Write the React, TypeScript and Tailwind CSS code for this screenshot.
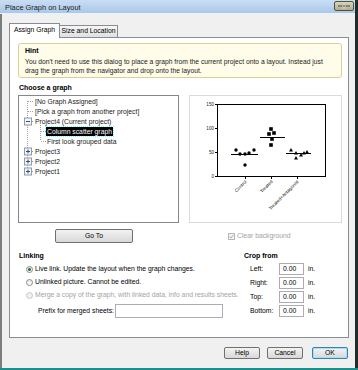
import React from "react";

function CloseBtn() {
  return (
    <div className="w-[20px] h-[10px] mt-[-1px] rounded-[2px] border border-[#54523f] bg-gradient-to-b from-[#d9d5bb] to-[#b3ad8a] flex items-center justify-center">
      <svg width="12" height="8" viewBox="0 0 12 8">
        <line x1="0" y1="4" x2="12" y2="4" stroke="#4a4838" strokeWidth="1" />
        <path d="M4 1.5 L8 6.5 M8 1.5 L4 6.5" stroke="#ffffff" strokeWidth="1.6" />
        <path d="M4 1.5 L8 6.5 M8 1.5 L4 6.5" stroke="#3a3a30" strokeWidth="0.6" />
      </svg>
    </div>
  );
}

function Btn({ label, w, ok }: { label: string; w: string; ok?: boolean }) {
  return (
    <div
      className={
        w +
        " h-full rounded-[2px] border flex items-center justify-center bg-gradient-to-b from-[#f3f3f3] to-[#d8d8d8] " +
        (ok ? "border-[#3c7fb1] shadow-[inset_0_0_0_1px_#9ee4f5]" : "border-[#707070]")
      }
    >
      <span className="text-[6.8px] text-black">{label}</span>
    </div>
  );
}

function Radio({ checked, disabled }: { checked?: boolean; disabled?: boolean }) {
  return (
    <div
      className={
        "w-[7px] h-[7px] rounded-full border flex items-center justify-center " +
        (disabled ? "border-[#c8c8c8] bg-[#f0f0f0]" : "border-[#8a8a8a] bg-gradient-to-b from-[#e6e6e6] to-[#ffffff]")
      }
    >
      {checked && <div className="w-[3px] h-[3px] rounded-full bg-[#1f6e3a]" />}
    </div>
  );
}

function TreeLines() {
  const dot = { stroke: "#a0a0a0", strokeWidth: 1, strokeDasharray: "1 1" } as const;
  const boxes = [25, 55, 65, 75];
  return (
    <svg className="absolute left-0 top-0" width="159" height="126" viewBox="0 0 159 126">
      <line x1="8.5" y1="5" x2="8.5" y2="75" {...dot} />
      {[5, 15, 25, 55, 65, 75].map((y) => (
        <line key={y} x1="9" y1={y + 0.5} x2="15" y2={y + 0.5} {...dot} />
      ))}
      <line x1="21.5" y1="29" x2="21.5" y2="45" {...dot} />
      {[35, 45].map((y) => (
        <line key={y} x1="22" y1={y + 0.5} x2="27" y2={y + 0.5} {...dot} />
      ))}
      {boxes.map((y) => (
        <g key={y}>
          <rect x="5.5" y={y - 3} width="7" height="7" fill="#f4f4f4" stroke="#8e9aa8" strokeWidth="1" />
          <line x1="7" y1={y + 0.5} x2="11" y2={y + 0.5} stroke="#2f4f7f" strokeWidth="1" />
          {y !== 25 && <line x1="9" y1={y - 1.5} x2="9" y2={y + 2.5} stroke="#2f4f7f" strokeWidth="1" />}
        </g>
      ))}
    </svg>
  );
}

function Chart() {
  const ctrl = [
    [46, 54],
    [50, 58],
    [55, 58],
    [59, 57],
    [64, 54],
    [55, 69],
  ];
  const trt = [
    [81, 33],
    [79, 38],
    [84, 37],
    [82, 43],
    [81, 49],
  ];
  const ant = [
    [101, 54],
    [106, 57],
    [111, 59],
    [114, 57],
    [117, 56],
    [106, 62],
  ];
  return (
    <svg width="151" height="126" viewBox="0 0 151 126">
      <rect x="27.5" y="8.5" width="108" height="72" fill="none" stroke="#000" strokeWidth="1" />
      {[
        ["150", 8],
        ["100", 32],
        ["50", 56],
        ["0", 80],
      ].map(([t, y]) => (
        <g key={t as string}>
          <line x1="25" y1={(y as number) + 0.5} x2="27.5" y2={(y as number) + 0.5} stroke="#000" strokeWidth="1" />
          <text x="24" y={(y as number) + 1.7} fontSize="4.6" textAnchor="end" fontFamily="Liberation Sans, Arial, sans-serif" fill="#222">
            {t}
          </text>
        </g>
      ))}
      {[55, 81, 107].map((x) => (
        <line key={x} x1={x + 0.5} y1="80.5" x2={x + 0.5} y2="83" stroke="#000" strokeWidth="1" />
      ))}
      {[
        ["Control", 57],
        ["Treated", 83],
        ["Treated+Antagonist", 109],
      ].map(([t, x]) => (
        <text
          key={t as string}
          x={x as number}
          y="86"
          fontSize="4.6"
          textAnchor="end"
          fontFamily="Liberation Sans, Arial, sans-serif"
          fill="#222"
          transform={`rotate(-45 ${x} 86)`}
        >
          {t}
        </text>
      ))}
      <line x1="41" y1="58.5" x2="68" y2="58.5" stroke="#000" strokeWidth="1" />
      <line x1="70" y1="41.5" x2="95" y2="41.5" stroke="#000" strokeWidth="1" />
      <line x1="96" y1="57.5" x2="121" y2="57.5" stroke="#000" strokeWidth="1" />
      {ctrl.map(([x, y], i) => (
        <circle key={i} cx={x} cy={y} r="1.7" fill="#000" />
      ))}
      {trt.map(([x, y], i) => (
        <rect key={i} x={x - 1.8} y={y - 1.8} width="3.6" height="3.6" fill="#000" />
      ))}
      {ant.map(([x, y], i) => (
        <path key={i} d={`M${x} ${y - 2} L${x + 2} ${y + 1.6} L${x - 2} ${y + 1.6} Z`} fill="#000" />
      ))}
    </svg>
  );
}

function TreeRow({ indent, children, sel }: { indent: number; children: React.ReactNode; sel?: boolean }) {
  return (
    <div className="h-[10px] flex items-center" style={{ paddingLeft: indent }}>
      <span className={"px-[1px] leading-[9px] " + (sel ? "bg-black text-white outline outline-1 outline-dotted outline-[#7ff]" : "text-[#1a1a1a]")}>
        {children}
      </span>
    </div>
  );
}

export default function App() {
  return (
    <div className="w-[358px] h-[370px] flex flex-col bg-[#1d2b2b] font-['Liberation_Sans',Arial,sans-serif] text-[6.8px] leading-none text-black overflow-hidden">
      <div className="flex h-[368px]">
        <div className="w-[355px] h-[368px] flex flex-col bg-[#f0f0f0]">
          {/* Title bar */}
          <div className="h-[14px] flex items-center justify-between pl-[5px] pr-[1px] bg-gradient-to-b from-[#c9def3] to-[#aac8e9] border-b border-[#e9f1fa]">
            <span className="text-[7.4px] text-[#1a1a1a] mt-[2px]">Place Graph on Layout</span>
            <CloseBtn />
          </div>

          {/* Body */}
          <div className="flex-1 flex flex-col border-l-2 border-[#7d7d7d] pl-[7px]">
            {/* Tabs */}
            <div className="mt-[9px] h-[15px] flex items-end relative z-10 -mb-px">
              <div className="w-[51px] h-[15px] border border-b-0 border-[#898c95] bg-white flex items-center justify-center pb-[1px]">
                <span>Assign Graph</span>
              </div>
              <div className="w-[58px] h-[13px] border border-l-0 border-[#898c95] bg-gradient-to-b from-[#f6f6f6] to-[#e0e0e0] flex items-center justify-center">
                <span>Size and Location</span>
              </div>
            </div>

            {/* Panel */}
            <div className="w-[340px] h-[301px] border border-[#898c95] bg-white flex flex-col">
              {/* Hint */}
              <div className="mt-[5px] ml-[8px] w-[324px] h-[35px] rounded-[3px] border border-[#d8cf96] bg-[#fffde9] pt-[3px] px-[6px]">
                <div className="h-[8px] leading-[8px] font-bold text-[7px]">Hint</div>
                <div className="mt-[2px] leading-[9px] text-[6.75px] text-[#1a1a1a] whitespace-nowrap">
                  You don't need to use this dialog to place a graph from the current project onto a layout. Instead just
                  <br />
                  drag the graph from the navigator and drop onto the layout.
                </div>
              </div>

              <div className="mt-[6px] ml-[9px] h-[8px] leading-[8px] font-bold text-[7px]">Choose a graph</div>

              <div className="mt-[3px] flex">
                <div className="ml-[8px] w-[161px] h-[128px] border border-[#828790] bg-white relative">
                  <TreeLines />
                  <div className="relative flex flex-col">
                    <TreeRow indent={15}>[No Graph Assigned]</TreeRow>
                    <TreeRow indent={15}>[Pick a graph from another project]</TreeRow>
                    <TreeRow indent={15}>Project4 (Current project)</TreeRow>
                    <TreeRow indent={27} sel>
                      Column scatter graph
                    </TreeRow>
                    <TreeRow indent={27}>First look grouped data</TreeRow>
                    <TreeRow indent={15}>Project3</TreeRow>
                    <TreeRow indent={15}>Project2</TreeRow>
                    <TreeRow indent={15}>Project1</TreeRow>
                  </div>
                </div>
                <div className="ml-[10px] w-[153px] h-[128px] border border-[#dadada] bg-white">
                  <Chart />
                </div>
              </div>

              <div className="mt-[6px] h-[14px] flex items-center">
                <div className="ml-[45px] w-[78px] h-[14px]">
                  <Btn label="Go To" w="w-full" />
                </div>
                <div className="ml-[95px] flex items-center gap-[2px] text-[#a3a3a3]">
                  <div className="w-[7px] h-[7px] border border-[#b8b8b8] bg-[#f4f4f4] flex items-center justify-center">
                    <svg width="5" height="5" viewBox="0 0 5 5">
                      <path d="M0.5 2.5 L2 4 L4.5 0.8" stroke="#a8a8a8" strokeWidth="0.9" fill="none" />
                    </svg>
                  </div>
                  <span>Clear background</span>
                </div>
              </div>

              <div className="mt-[9px] flex">
                <div className="w-[234px] flex flex-col">
                  <div className="ml-[9px] h-[8px] leading-[8px] font-bold text-[7px]">Linking</div>
                  <div className="mt-[3px] ml-[16px] h-[13px] flex items-center gap-[2px]">
                    <Radio checked />
                    <span>Live link. Update the layout when the graph changes.</span>
                  </div>
                  <div className="ml-[16px] h-[13px] flex items-center gap-[2px]">
                    <Radio />
                    <span>Unlinked picture. Cannot be edited.</span>
                  </div>
                  <div className="ml-[16px] h-[13px] flex items-center gap-[2px] text-[#a3a3a3] whitespace-nowrap">
                    <Radio disabled />
                    <span>Merge a copy of the graph, with linked data, info and results sheets.</span>
                  </div>
                  <div className="mt-[2px] ml-[28px] h-[14px] flex items-center">
                    <span className="w-[73px] whitespace-nowrap">Prefix for merged sheets:</span>
                    <div className="ml-[4px] w-[108px] h-[14px] border border-[#abadb3] bg-white" />
                  </div>
                </div>
                <div className="flex flex-col">
                  <div className="h-[8px] leading-[8px] font-bold text-[7px]">Crop from</div>
                  <div className="mt-[2px] flex flex-col">
                    {["Left:", "Right:", "Top:", "Bottom:"].map((l) => (
                      <div key={l} className="h-[14px] flex items-center ml-[6px]">
                        <span className="w-[29px]">{l}</span>
                        <div className="w-[25px] h-[12px] border border-[#abadb3] bg-white pl-[3px] flex items-center">0.00</div>
                        <span className="ml-[4px]">in.</span>
                      </div>
                    ))}
                  </div>
                </div>
              </div>
            </div>

            {/* Buttons */}
            <div className="mt-[9px] h-[12px] flex justify-end pr-[7px]">
              <Btn label="Help" w="w-[36px]" />
              <div className="w-[7px]" />
              <Btn label="Cancel" w="w-[36px]" />
              <div className="w-[9px]" />
              <Btn label="OK" w="w-[36px]" ok />
            </div>
          </div>
        </div>
        <div className="flex-1 bg-[#1f2c2c]" />
      </div>
      <div className="h-[2px] bg-[#18918c]" />
    </div>
  );
}
